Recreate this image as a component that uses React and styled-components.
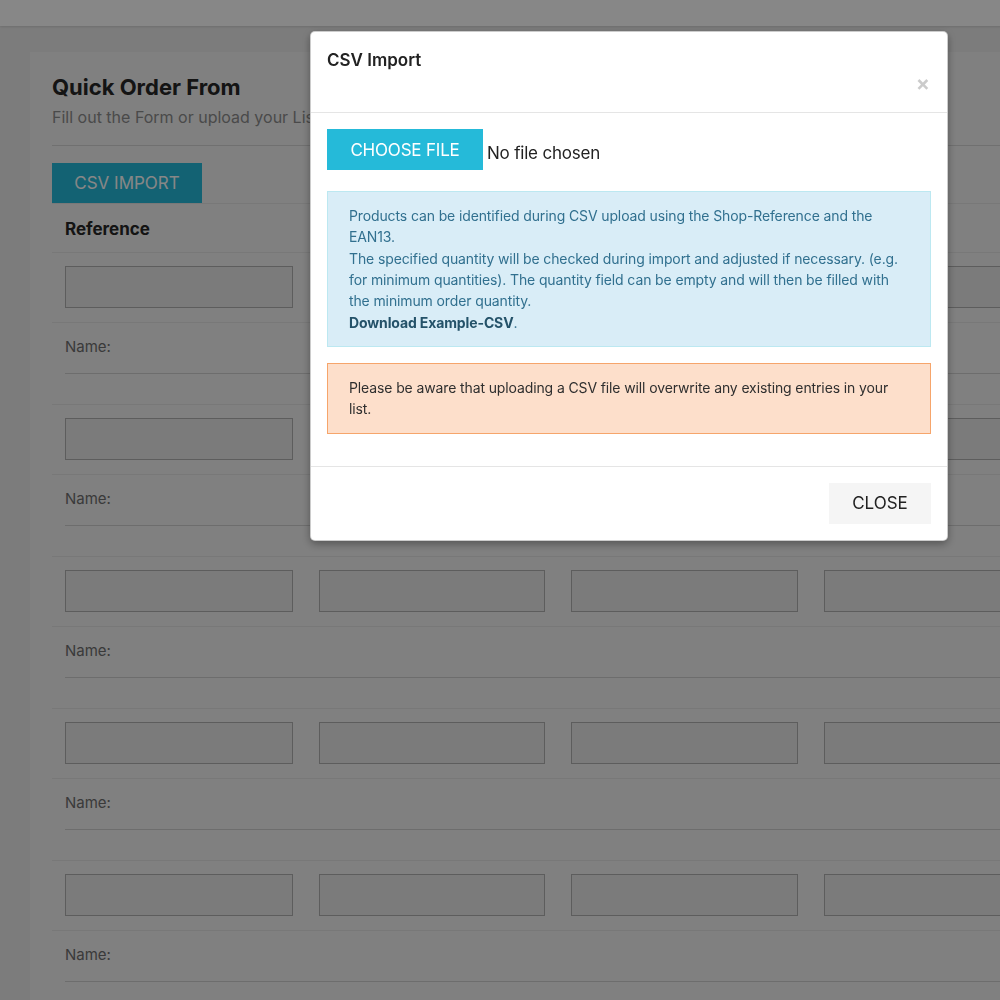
import React from 'react'
import styled, { createGlobalStyle } from 'styled-components'

const GlobalStyle = createGlobalStyle`
  html, body {
    margin: 0;
    padding: 0;
    overflow: hidden;
    background: #ebebeb;
  }
  body {
    font-family: Inter, "Noto Sans", "Liberation Sans", sans-serif;
    color: #222;
  }
  * { box-sizing: border-box; }
`

const font = `Inter, "Noto Sans", "Liberation Sans", sans-serif`

const Page = styled.div`
  width: 1258px;
  height: 1000px;
  background: #ebebeb;
  position: relative;
  overflow: hidden;
`

const TopBar = styled.div`
  height: 26px;
  background: #fff;
  box-shadow: 0 1px 2px rgba(0, 0, 0, 0.12);
`

const Main = styled.div`
  display: flex;
  padding: 26px 30px 0;
`

const Card = styled.div`
  flex: 1;
  background: #f2f2f2;
  padding: 20px 22px 0;
  height: 948px;
`

const Title = styled.h1`
  margin: 0;
  font-size: 22px;
  line-height: 30px;
  font-weight: 700;
  color: #262626;
`

const Subtitle = styled.p`
  margin: 0;
  font-size: 16px;
  line-height: 30px;
  color: #8c8c8c;
`

const Rule = styled.hr`
  margin: 13px 0 17px;
  border: 0;
  border-top: 1px solid #d4d4d4;
`

const ImportButton = styled.button`
  display: block;
  width: 150px;
  height: 40px;
  border: 0;
  background: #25bad9;
  color: #fff;
  font-family: ${font};
  font-size: 17px;
  text-transform: uppercase;
  padding: 0;
`

const Grid = styled.div`
  display: grid;
  grid-template-columns: 254px 252px 253px 253px 1fr;
  border-top: 1px solid #e3e3e3;
`

const HeadCell = styled.div`
  padding: 13px 13px 11px;
  font-size: 17px;
  line-height: 24px;
  font-weight: 700;
  color: #262626;
`

const InputCell = styled.div`
  padding: 13px 13px 14px;
`

const Field = styled.div`
  height: 42px;
  border: 1px solid #b0b0b0;
  background: #e8e8e8;
`

const NameRow = styled.div`
  border-top: 1px solid #e3e3e3;
  padding: 12px 13px 0;
  margin-bottom: 30px;
`

const NameLabel = styled.div`
  font-size: 15px;
  line-height: 24px;
  color: #6e6e6e;
  padding-bottom: 14px;
  border-bottom: 1px solid #cfcfcf;
`

const Overlay = styled.div`
  position: fixed;
  left: 0;
  top: 0;
  width: 1258px;
  height: 1000px;
  background: rgba(0, 0, 0, 0.47);
  display: flex;
  justify-content: center;
  align-items: flex-start;
`

const Modal = styled.div`
  width: 638px;
  margin-top: 31px;
  background: #fff;
  border: 1px solid rgba(0, 0, 0, 0.2);
  border-radius: 5px;
  box-shadow: 0 3px 9px rgba(0, 0, 0, 0.35);
`

const ModalHeader = styled.div`
  padding: 16px;
  border-bottom: 1px solid #e5e5e5;
`

const ModalTitle = styled.h4`
  margin: 0;
  font-size: 17px;
  line-height: 24px;
  font-weight: 600;
  color: #222;
`

const CloseX = styled.div`
  text-align: right;
  font-size: 21px;
  line-height: 24px;
  font-weight: 700;
  color: #000;
  opacity: 0.2;
  padding-right: 1px;
`

const ModalBody = styled.div`
  padding: 16px;
`

const FileRow = styled.div`
  display: flex;
  align-items: flex-end;
  margin-bottom: 21px;
`

const FileButton = styled.span`
  display: inline-flex;
  align-items: center;
  justify-content: center;
  width: 156px;
  height: 41px;
  background: #25bad9;
  color: #fff;
  font-size: 17px;
  letter-spacing: -0.2px;
  text-transform: uppercase;
`

const FileText = styled.span`
  margin: 0 0 7px 4px;
  font-size: 17px;
  line-height: 20px;
  letter-spacing: -0.2px;
  color: #222;
`

const Alert = styled.div`
  padding: 13px 21px;
  margin-bottom: 16px;
  font-size: 14px;
  line-height: 21.33px;
  letter-spacing: -0.12px;
  border: 1px solid ${p => (p.$kind === 'warning' ? '#f6a56b' : '#bce8f1')};
  background: ${p => (p.$kind === 'warning' ? '#fddfcb' : '#d9edf7')};
  color: ${p => (p.$kind === 'warning' ? '#2f2f2f' : '#31708f')};
`

const AlertLink = styled.a`
  font-weight: 700;
  color: #245269;
  text-decoration: none;
`

const ModalFooter = styled.div`
  display: flex;
  justify-content: flex-end;
  padding: 16px;
  border-top: 1px solid #e5e5e5;
`

const CloseButton = styled.button`
  width: 102px;
  height: 41px;
  border: 0;
  background: #f5f5f5;
  color: #222;
  font-family: ${font};
  font-size: 17px;
  text-transform: uppercase;
  padding: 0;
`

const blocks = [0, 1, 2, 3, 4]
const cols = [0, 1, 2, 3, 4]

export default function App() {
  return (
    <Page>
      <GlobalStyle />
      <TopBar />
      <Main>
        <Card>
          <Title>Quick Order From</Title>
          <Subtitle>Fill out the Form or upload your List as CSV-File.</Subtitle>
          <Rule />
          <ImportButton>CSV Import</ImportButton>
          <Grid>
            <HeadCell>Reference</HeadCell>
          </Grid>
          {blocks.map(b => (
            <div key={b}>
              <Grid>
                {cols.map(c => (
                  <InputCell key={c}>{c < 4 && <Field />}</InputCell>
                ))}
              </Grid>
              <NameRow>
                <NameLabel>Name:</NameLabel>
              </NameRow>
            </div>
          ))}
        </Card>
      </Main>
      <Overlay>
        <Modal>
          <ModalHeader>
            <ModalTitle>CSV Import</ModalTitle>
            <CloseX>×</CloseX>
          </ModalHeader>
          <ModalBody>
            <FileRow>
              <FileButton>Choose File</FileButton>
              <FileText>No file chosen</FileText>
            </FileRow>
            <Alert $kind="info">
              Products can be identified during CSV upload using the Shop-Reference and the EAN13.
              <br />
              The specified quantity will be checked during import and adjusted if necessary. (e.g.
              for minimum quantities). The quantity field can be empty and will then be filled with
              the minimum order quantity.
              <br />
              <AlertLink href="#">Download Example-CSV</AlertLink>.
            </Alert>
            <Alert $kind="warning">
              Please be aware that uploading a CSV file will overwrite any existing entries in your
              list.
            </Alert>
          </ModalBody>
          <ModalFooter>
            <CloseButton>Close</CloseButton>
          </ModalFooter>
        </Modal>
      </Overlay>
    </Page>
  )
}
